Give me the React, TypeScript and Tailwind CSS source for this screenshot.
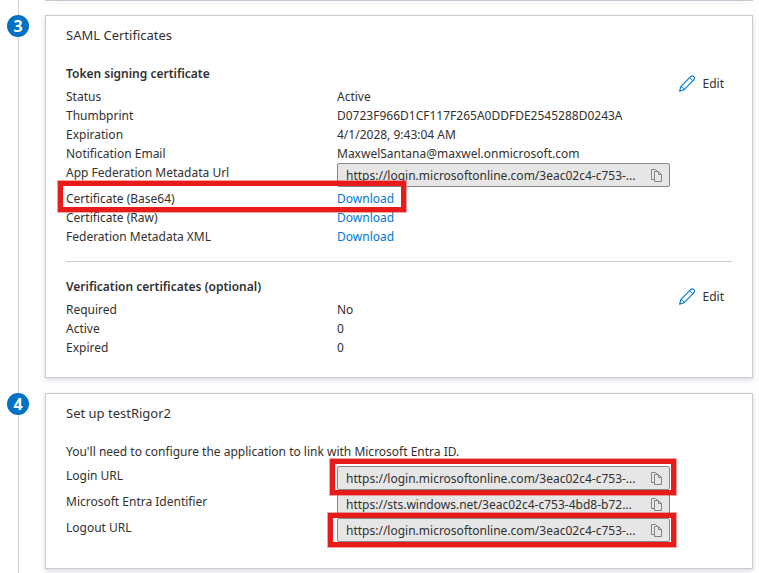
import React from 'react';
import clsx from 'clsx';

type Row = {
  label: string;
  value: string;
  kind?: 'text' | 'link' | 'copy';
  rowMark?: boolean;
  fieldMark?: string;
};

const signingRows: Row[] = [
  { label: 'Status', value: 'Active' },
  { label: 'Thumbprint', value: 'D0723F966D1CF117F265A0DDFDE2545288D0243A' },
  { label: 'Expiration', value: '4/1/2028, 9:43:04 AM' },
  { label: 'Notification Email', value: 'MaxwelSantana@maxwel.onmicrosoft.com' },
  { label: 'App Federation Metadata Url', value: 'https://login.microsoftonline.com/3eac02c4-c753-...', kind: 'copy' },
  { label: 'Certificate (Base64)', value: 'Download', kind: 'link', rowMark: true },
  { label: 'Certificate (Raw)', value: 'Download', kind: 'link' },
  { label: 'Federation Metadata XML', value: 'Download', kind: 'link' },
];

const verificationRows: Row[] = [
  { label: 'Required', value: 'No' },
  { label: 'Active', value: '0' },
  { label: 'Expired', value: '0' },
];

const setupRows: Row[] = [
  { label: 'Login URL', value: 'https://login.microsoftonline.com/3eac02c4-c753-...', kind: 'copy', fieldMark: '-top-2 -left-2' },
  { label: 'Microsoft Entra Identifier', value: 'https://sts.windows.net/3eac02c4-c753-4bd8-b72...', kind: 'copy' },
  { label: 'Logout URL', value: 'https://login.microsoftonline.com/3eac02c4-c753-...', kind: 'copy', fieldMark: '-top-1.5 -left-2.5' },
];

const PencilIcon = () => (
  <svg width="16" height="17" viewBox="0 0 16 17" fill="none" stroke="#0078d4" strokeLinejoin="round">
    <path d="M.6 16.3l1.2-4.6L11.6 1.7a2.3 2.3 0 0 1 3.2 0 2.3 2.3 0 0 1 0 3.2L4.9 14.8z" strokeWidth="1.1" />
    <path d="M10.6 2.8l3.1 3.1M1.8 11.7c1.6.1 2.9 1.4 3.1 3.1M.9 14.8l1.1 1.1" />
  </svg>
);

const CopyIcon = () => (
  <svg width="12" height="13" viewBox="0 0 12 13" fill="none" stroke="#858585">
    <path d="M3 10.5H.5V.5h4l2 2" />
    <path d="M3.5 2.5h4l3 3v7h-7zM7.5 2.5v3h3" />
  </svg>
);

const Mark = ({ className }: { className: string }) => (
  <div className={clsx('pointer-events-none absolute z-10 border-5 border-[#e81b1b] outline outline-[#e81b1b]/40', className)} />
);

const CopyField = ({ id, row }: { id: string; row: Row }) => (
  <div className="relative mb-0.5 flex h-6 w-[333px] items-center rounded-xs border border-[#8a8886] bg-[#e6e6e6] pr-1.5 pl-2">
    <input id={id} readOnly value={row.value} className="min-w-0 flex-1 bg-transparent text-[#323130] outline-none" />
    <button type="button" aria-label={`Copy ${row.label}`}>
      <CopyIcon />
    </button>
    {row.fieldMark && <Mark className={clsx('-right-[7px] -bottom-1.5', row.fieldMark)} />}
  </div>
);

const PropertyRow = ({ row }: { row: Row }) => {
  const id = row.label.toLowerCase().replace(/[^a-z0-9]+/g, '-');
  return (
    <div className="relative flex">
      {row.kind === 'copy' ? (
        <label htmlFor={id} className="w-[271px] shrink-0">{row.label}</label>
      ) : (
        <span className="w-[271px] shrink-0">{row.label}</span>
      )}
      {row.kind === 'copy' && <CopyField id={id} row={row} />}
      {row.kind === 'link' && <a href="#" className="text-[#0078d4]">{row.value}</a>}
      {!row.kind && <span>{row.value}</span>}
      {row.rowMark && <Mark className="-top-2 -bottom-1 -left-2 w-[348px]" />}
    </div>
  );
};

const Section = ({ title, rows }: { title: string; rows: Row[] }) => (
  <section className="flex items-start justify-between">
    <div>
      <h3 className="mb-1 font-semibold">{title}</h3>
      {rows.map((row) => <PropertyRow key={row.label} row={row} />)}
    </div>
    <button type="button" className="mt-2.5 mr-2 flex items-center gap-2">
      <PencilIcon />
      Edit
    </button>
  </section>
);

const Step = ({ number, title, children }: { number: number; title: string; children: React.ReactNode }) => (
  <div className="relative flex items-start pl-[7px]">
    <div className="mr-4 flex size-[22px] items-center justify-center rounded-full bg-[#0072c6] text-base font-bold text-white">
      {number}
    </div>
    <div className="min-w-0 flex-1 border border-[#cccccc] bg-white px-5 pt-2.5 pb-5 shadow-[0_2px_5px_rgba(0,20,80,0.16)]">
      <h2 className="mb-[19px] text-[13px]">{title}</h2>
      {children}
    </div>
  </div>
);

const App: React.FC = () => {
  return (
    <main className="relative min-h-screen overflow-hidden bg-white pr-1.5 font-['Noto_Sans','Open_Sans',sans-serif] text-xs/[19px] text-[#323130]">
      {/* Timeline rail */}
      <div className="absolute inset-y-0 left-[18px] w-px bg-[#cccccc]" />
      {/* Bottom edge of the previous step */}
      <div className="ml-[45px] h-px bg-[#c8cad6] shadow-[0_2px_5px_rgba(0,20,80,0.16)]" />

      <div className="mt-3.5 flex flex-col gap-[15px]">
        <Step number={3} title="SAML Certificates">
          <Section title="Token signing certificate" rows={signingRows} />
          <hr className="my-[15px] border-[#cccccc]" />
          <Section title="Verification certificates (optional)" rows={verificationRows} />
        </Step>
        <Step number={4} title="Set up testRigor2">
          <p className="mb-[5px]">You'll need to configure the application to link with Microsoft Entra ID.</p>
          {setupRows.map((row) => <PropertyRow key={row.label} row={row} />)}
          <div className="h-1" />
        </Step>
      </div>
    </main>
  );
};

export default App;
